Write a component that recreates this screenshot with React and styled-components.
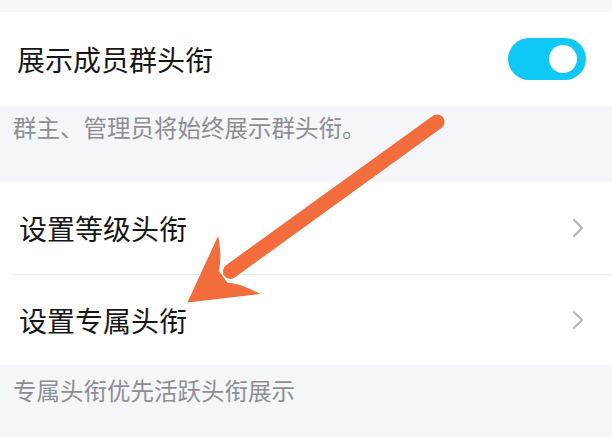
import React from "react";
import styled, { createGlobalStyle } from "styled-components";

const Global = createGlobalStyle`
  html, body { margin: 0; padding: 0; background: #f5f6fa; }
  body { font-family: "Noto Sans CJK SC", "Noto Sans", sans-serif; }
`;

const Page = styled.div`
  position: relative;
  width: 612px;
  height: 437px;
  overflow: hidden;
  background: #f5f6fa;
  padding-top: 12px;
  box-sizing: border-box;
`;

const Card = styled.div`
  background: #ffffff;
  display: flex;
  flex-direction: column;
`;

const Row = styled.div`
  height: ${(p) => p.$h}px;
  display: flex;
  align-items: center;
  justify-content: space-between;
  padding: 0 ${(p) => p.$pr}px 0 ${(p) => p.$pl}px;
  box-sizing: border-box;
`;

const Title = styled.span`
  font-size: 28px;
  line-height: 1;
  color: #161616;
`;

const Divider = styled.div`
  height: 1px;
  margin-left: 12px;
  background: #ececef;
`;

const Caption = styled.div`
  height: ${(p) => p.$h}px;
  box-sizing: border-box;
  padding: ${(p) => p.$pt}px 0 0 13px;
  font-size: 23.5px;
  line-height: 32px;
  color: #8d8e93;
`;

const Switch = styled.div`
  width: 78px;
  height: 42px;
  border-radius: 21px;
  background: #0fc8f6;
  display: flex;
  align-items: center;
  justify-content: flex-end;
  padding-right: 9px;
  box-sizing: border-box;
`;

const Knob = styled.div`
  width: 28px;
  height: 28px;
  border-radius: 50%;
  background: #ffffff;
`;

const Overlay = styled.svg`
  position: absolute;
  left: 0;
  top: 0;
  pointer-events: none;
`;

const Chevron = () => (
  <svg width="12" height="20" viewBox="0 0 12 20">
    <polyline
      points="2,2 10,10 2,18"
      fill="none"
      stroke="#b3b3b8"
      strokeWidth="2"
      strokeLinecap="round"
      strokeLinejoin="round"
    />
  </svg>
);

export default function App() {
  return (
    <>
      <Global />
      <Page>
        <Card>
          <Row $h={94} $pl={17} $pr={26}>
            <Title>展示成员群头衔</Title>
            <Switch>
              <Knob />
            </Switch>
          </Row>
        </Card>
        <Caption $h={76} $pt={5}>群主、管理员将始终展示群头衔。</Caption>
        <Card>
          <Row $h={92} $pl={19} $pr={28}>
            <Title>设置等级头衔</Title>
            <Chevron />
          </Row>
          <Divider />
          <Row $h={90} $pl={19} $pr={28}>
            <Title>设置专属头衔</Title>
            <Chevron />
          </Row>
        </Card>
        <Caption $h={72} $pt={9}>专属头衔优先活跃头衔展示</Caption>
        <Overlay width="612" height="437" viewBox="0 0 612 437">
          <g transform="translate(437 122) rotate(144.14)">
            <line x1="0" y1="0" x2="255" y2="0" stroke="#f36c3b" strokeWidth="15" strokeLinecap="round" />
            <path
              d="M308,0 L244,-36 Q254,-15 264,-7.5 L264,7.5 Q254,15 244,36 Z"
              fill="#f36c3b"
            />
          </g>
        </Overlay>
      </Page>
    </>
  );
}
